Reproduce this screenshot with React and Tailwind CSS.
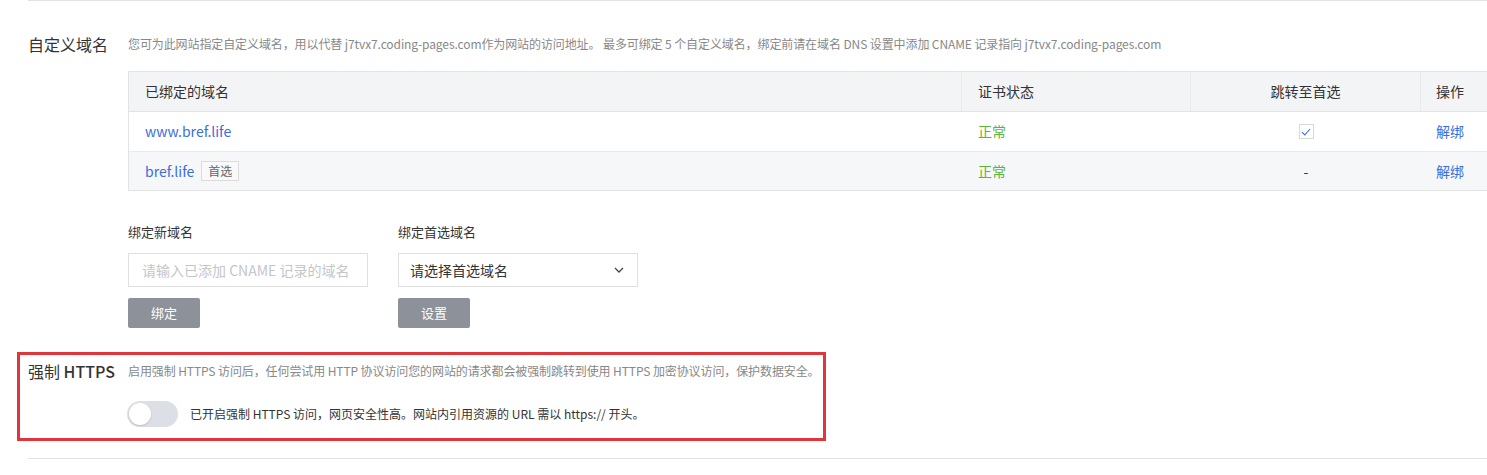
import React from "react";

const font = { fontFamily: '"Noto Sans CJK SC", "Noto Sans", sans-serif' };

function Check() {
  return (
    <span className="inline-flex h-[15px] w-[15px] items-center justify-center border border-[#d9d9d9] bg-white">
      <svg width="10" height="8" viewBox="0 0 10 8" fill="none">
        <path d="M1 4.2 L3.8 7 L9 1" stroke="#3d6ddc" strokeWidth="1.1" />
      </svg>
    </span>
  );
}

export default function App() {
  return (
    <div className="h-[475px] w-[1487px] overflow-hidden bg-white text-[#333]" style={font}>
      <div className="ml-[28px] border-t border-[#e3e3e3]" />

      {/* Custom domain */}
      <div className="mt-[31px] flex items-center pl-[28px]">
        <div className="w-[100px] text-[16px] leading-[24px] text-[#333]">自定义域名</div>
        <div className="whitespace-nowrap text-[12px] leading-[20px] tracking-[-0.1px] text-[#888]">
          您可为此网站指定自定义域名，用以代替 j7tvx7.coding-pages.com作为网站的访问地址。 最多可绑定 5 个自定义域名，绑定前请在域名 DNS 设置中添加 CNAME 记录指向 j7tvx7.coding-pages.com
        </div>
      </div>

      <div className="ml-[128px] mt-[15px] w-[1400px] border-l border-t border-[#e3e3e3] text-[14px]">
        <div className="flex h-[40px] items-center border-b border-[#e3e3e3] bg-[#f3f4f6] text-[#333]">
          <div className="flex h-full w-[833px] items-center border-r border-[#e9eaec] pl-[16px]">已绑定的域名</div>
          <div className="flex h-full w-[229px] items-center border-r border-[#e9eaec] pl-[16px]">证书状态</div>
          <div className="flex h-full w-[230px] items-center justify-center border-r border-[#e9eaec]">跳转至首选</div>
          <div className="flex h-full flex-1 items-center pl-[15px]">操作</div>
        </div>
        <div className="flex h-[40px] items-center border-b border-[#e9eaec] bg-white">
          <div className="w-[833px] pl-[16px] text-[#3d6ddc]">www.bref.life</div>
          <div className="w-[229px] pl-[16px] text-[#5fb536]">正常</div>
          <div className="flex w-[230px] justify-center">
            <Check />
          </div>
          <div className="flex-1 pl-[15px] text-[#3d6ddc]">解绑</div>
        </div>
        <div className="flex h-[39px] items-center border-b border-[#e3e3e3] bg-[#f6f7f9]">
          <div className="flex w-[833px] items-center pl-[16px]">
            <span className="text-[#3d6ddc]">bref.life</span>
            <span className="ml-[7px] border border-[#dcdcdc] bg-[#f9f9f9] px-[6px] text-[12px] leading-[18px] text-[#666]">首选</span>
          </div>
          <div className="w-[229px] pl-[16px] text-[#5fb536]">正常</div>
          <div className="flex w-[230px] justify-center text-[#333]">-</div>
          <div className="flex-1 pl-[15px] text-[#3d6ddc]">解绑</div>
        </div>
      </div>

      {/* Bind forms */}
      <div className="ml-[128px] mt-[31px] flex gap-[30px]">
        <div className="flex w-[240px] flex-col">
          <div className="text-[13px] leading-[20px] text-[#333]">绑定新域名</div>
          <div className="mt-[11px] flex h-[34px] items-center overflow-hidden whitespace-nowrap border border-[#e0e0e0] pl-[13px] text-[14px] text-[#c4c6cb]">
            请输入已添加 CNAME 记录的域名
          </div>
          <button className="mt-[11px] h-[30px] w-[72px] rounded-[2px] bg-[#8d9199] text-[13px] text-white">绑定</button>
        </div>
        <div className="flex w-[240px] flex-col">
          <div className="text-[13px] leading-[20px] text-[#333]">绑定首选域名</div>
          <div className="mt-[11px] flex h-[34px] items-center justify-between border border-[#e0e0e0] pl-[11px] pr-[13px] text-[14px] text-[#333]">
            <span>请选择首选域名</span>
            <svg width="10" height="6" viewBox="0 0 10 6" fill="none">
              <path d="M1 1 L5 5 L9 1" stroke="#444" strokeWidth="1.3" />
            </svg>
          </div>
          <button className="mt-[11px] h-[30px] w-[72px] rounded-[2px] bg-[#8d9199] text-[13px] text-white">设置</button>
        </div>
      </div>

      {/* Force HTTPS (highlighted) */}
      <div className="ml-[17px] mt-[24px] w-[809px] border-[3px] border-[#e0353b] pb-[11px] pl-[8px] pt-[4px]">
        <div className="flex items-center">
          <div className="w-[100px] whitespace-nowrap text-[16px] leading-[24px] text-[#333]">
            强制 <span className="font-medium">HTTPS</span>
          </div>
          <div className="whitespace-nowrap text-[12px] leading-[20px] tracking-[-0.1px] text-[#888]">
            启用强制 HTTPS 访问后，任何尝试用 HTTP 协议访问您的网站的请求都会被强制跳转到使用 HTTPS 加密协议访问，保护数据安全。
          </div>
        </div>
        <div className="ml-[99px] mt-[18px] flex items-center">
          <div className="flex h-[26px] w-[51px] items-center rounded-full bg-[#dcdfe5] pl-[2px]">
            <div className="h-[22px] w-[22px] rounded-full bg-white shadow-[0_1px_2px_rgba(0,0,0,0.15)]" />
          </div>
          <div className="ml-[12px] whitespace-nowrap text-[12px] text-[#333]">
            已开启强制 HTTPS 访问，网页安全性高。网站内引用资源的 URL 需以 https:// 开头。
          </div>
        </div>
      </div>

      <div className="ml-[28px] mt-[17px] border-t border-[#e3e3e3]" />
    </div>
  );
}
